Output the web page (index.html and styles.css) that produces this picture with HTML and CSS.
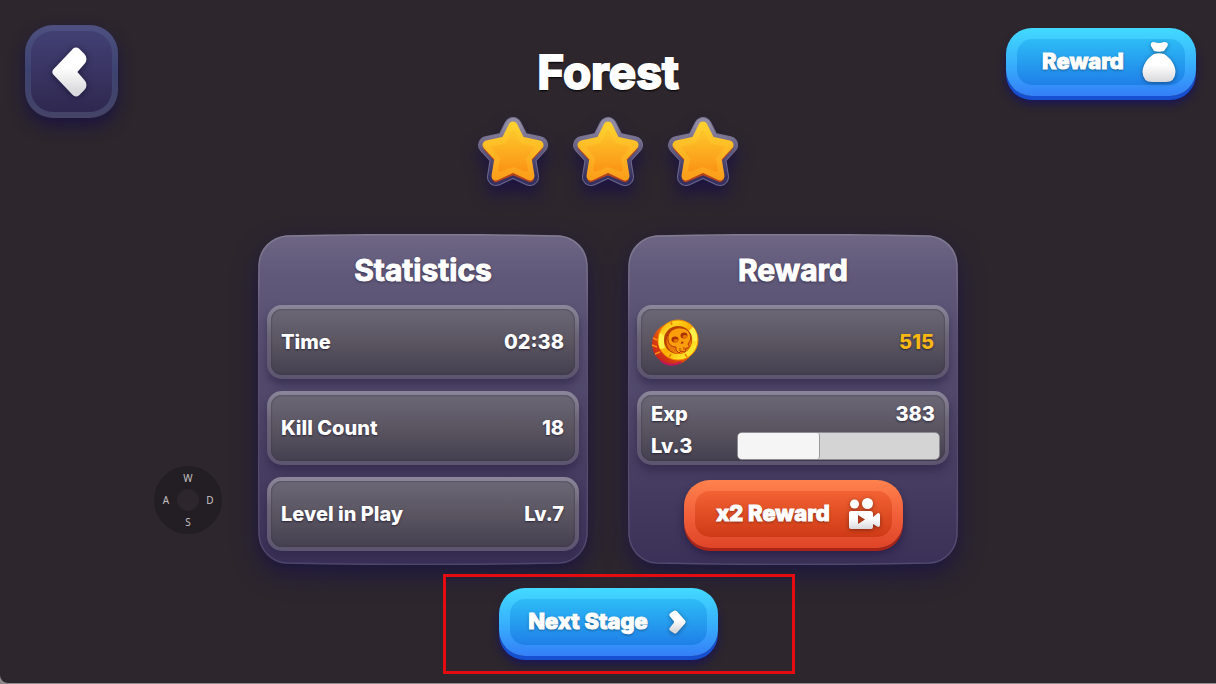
FILE: index.html
```
<!DOCTYPE html>
<html lang="en">
<head>
<meta charset="utf-8">
<meta name="viewport" content="width=device-width, initial-scale=1">
<title>Forest</title>
<link rel="stylesheet" href="styles.css">
</head>
<body>
<svg class="defs" aria-hidden="true">
  <defs>
    <linearGradient id="rim" x1="0" y1="0" x2="0" y2="1"><stop offset="0" stop-color="#918ba3"/><stop offset=".45" stop-color="#645c80"/><stop offset="1" stop-color="#35305f"/></linearGradient>
    <linearGradient id="rimEdge" x1="0" y1="0" x2="0" y2="1"><stop offset="0" stop-color="#77718e"/><stop offset="1" stop-color="#6a678c"/></linearGradient>
    <linearGradient id="gold" x1="0" y1="0" x2="0" y2="1"><stop offset="0" stop-color="#ffd02e"/><stop offset="1" stop-color="#fca01c"/></linearGradient>
    <linearGradient id="goldInner" x1="0" y1="0" x2="0" y2="1"><stop offset="0" stop-color="#fdc42a"/><stop offset="1" stop-color="#fb9616"/></linearGradient>
    <linearGradient id="white" x1="0" y1="0" x2="0" y2="1"><stop offset=".4" stop-color="#fff"/><stop offset="1" stop-color="#d9d9dc"/></linearGradient>
    <linearGradient id="panelFill" x1="0" y1="0" x2="0" y2="1"><stop offset="0" stop-color="#6e6684"/><stop offset=".12" stop-color="#61597a"/><stop offset=".5" stop-color="#50486a"/><stop offset="1" stop-color="#3b3158"/></linearGradient>
    <linearGradient id="panelEdge" x1="0" y1="0" x2="0" y2="1"><stop offset="0" stop-color="#837d92"/><stop offset=".3" stop-color="#5d5575"/><stop offset="1" stop-color="#51496f"/></linearGradient>
    <linearGradient id="coinSide" x1="1" y1="0" x2="0" y2="1"><stop offset="0" stop-color="#ffb000"/><stop offset=".5" stop-color="#e85a08"/><stop offset="1" stop-color="#b80b25"/></linearGradient>
    <linearGradient id="coinFace" x1="0" y1="0" x2="1" y2="1"><stop offset="0" stop-color="#ff9b00"/><stop offset=".25" stop-color="#ffd51f"/><stop offset=".5" stop-color="#ffae00"/><stop offset=".8" stop-color="#ffe92e"/><stop offset="1" stop-color="#f79400"/></linearGradient>
    <symbol id="star" viewBox="0 0 70 72">
      <g stroke-linejoin="round">
        <path d="M35 10 42.500 25 61 29 49 42 52 61 35 53 18 61 21 42 9 29 27.500 25Z" fill="url(#rimEdge)" stroke="url(#rimEdge)" stroke-width="18"/>
        <path d="M35 10 42.500 25 61 29 49 42 52 61 35 53 18 61 21 42 9 29 27.500 25Z" fill="url(#rim)" stroke="url(#rim)" stroke-width="16"/>
        <path d="M35 12 42.500 27 61 31 49 44 52 62 35 55 18 62 21 44 9 31 27.500 27Z" fill="#b4431e" stroke="#b4431e" stroke-width="8"/>
        <path d="M35 10 42.500 25 61 29 49 42 52 60 35 52 18 60 21 42 9 29 27.500 25Z" fill="url(#gold)" stroke="url(#gold)" stroke-width="9"/>
        <path d="M35 17 41 29 54 32 46 42 48 54 35 49 22 54 24 42 16 32 29 29Z" fill="url(#goldInner)" stroke="url(#goldInner)" stroke-width="4"/>
      </g>
    </symbol>
    <symbol id="plate" viewBox="0 0 330 331" preserveAspectRatio="none">
      <path d="M28 2Q165 -1 302 2C317 4 328 15 329 30Q331 165 329 301C328 316 317 328 302 329Q165 332 28 329C13 328 2 316 1 301Q-1 165 1 30C2 15 13 4 28 2Z" fill="url(#panelFill)" stroke="url(#panelEdge)" stroke-width="1.500"/>
    </symbol>
  </defs>
</svg>

<main class="screen">
  <header class="top">
    <button class="back" type="button" aria-label="Back">
      <svg viewBox="0 0 38 52" width="38" height="52"><path d="M25 6 6 26 25 46 30 41Q32 39 30 37L23 29Q21 26 23 23L30 15Q32 13 30 11Z" fill="url(#white)" stroke="url(#white)" stroke-width="9" stroke-linejoin="round"/></svg>
    </button>
    <div class="heading">
      <h1>Forest</h1>
      <div class="stars" role="img" aria-label="3 of 3 stars">
        <svg class="star"><use href="#star"/></svg>
        <svg class="star"><use href="#star"/></svg>
        <svg class="star"><use href="#star"/></svg>
      </div>
    </div>
    <button class="btn blue reward-btn" type="button">
      <span>Reward</span>
      <svg viewBox="0 0 34 42" width="34" height="42"><path d="M12 10 9 5Q8 1 12 1Q17 3 22 1Q27 1 25.500 5L22 10Q17 11.500 12 10Z" fill="#fff"/><path d="M12 13Q17 11.500 22 13C29 17 33.500 25 33.500 31Q33 41 24 41H10Q1 41 .5 31C.5 25 5 17 12 13Z" fill="url(#white)"/></svg>
    </button>
  </header>

  <div class="panels">
    <section class="panel">
      <svg class="plate" aria-hidden="true"><use href="#plate"/></svg>
      <h2>Statistics</h2>
      <dl class="rows">
        <div class="row"><dt>Time</dt><dd>02:38</dd></div>
        <div class="row"><dt>Kill Count</dt><dd>18</dd></div>
        <div class="row"><dt>Level in Play</dt><dd>Lv.7</dd></div>
      </dl>
    </section>

    <section class="panel">
      <svg class="plate" aria-hidden="true"><use href="#plate"/></svg>
      <h2>Reward</h2>
      <div class="rows">
        <div class="row coins">
          <svg viewBox="0 0 48 48" width="48" height="48" role="img" aria-label="Coins">
            <circle cx="22" cy="26" r="21" fill="url(#coinSide)"/>
            <path d="M2 20 6 22M1 27 6 29M4 36 9 34" stroke="#ff8a12" stroke-width="1.500"/>
            <path d="M10 43Q20 50 30 44" stroke="#c4145a" stroke-width="2" fill="none"/>
            <circle cx="27" cy="22" r="20" fill="url(#coinFace)" stroke="#f08a00"/>
            <path d="M9 31Q6 24 9 15L14 18Q12 25 14 30ZM42 9Q47 15 46 23L42 23Q41 16 38 13Z" fill="#fff04a"/>
            <path d="M20 4 21 7M18 39 20 36M36 39 34 36" stroke="#e98000" stroke-width="1.500"/>
            <circle cx="27" cy="22" r="14" fill="#b94004"/>
            <circle cx="28" cy="23.500" r="12.500" fill="#e87a05"/>
            <path d="M17 22C16 13 24 9 31 10 38 11 41 17 39 23L37 26Q39 29 37 30L35 30 34 34 30 33 28 35 25 32 25 29Q18 29 17 22Z" fill="#fb9e0c" stroke="#b83c02"/>
            <ellipse cx="24" cy="21.500" rx="3.500" ry="3" fill="#a83202"/><ellipse cx="33" cy="17.500" rx="3.500" ry="3" fill="#a83202"/>
            <ellipse cx="25" cy="22.500" rx="2.500" ry="1.500" fill="#e87404"/><ellipse cx="34" cy="18.500" rx="2.500" ry="1.500" fill="#e87404"/>
            <path d="M29.500 26 31 23 33 25Z" fill="#a83202"/><path d="M29 30V33M33 29V32" stroke="#b84202"/>
          </svg>
          <strong>515</strong>
        </div>
        <div class="row exp">
          <span>Exp</span><span class="gain">383</span>
          <label for="exp-bar">Lv.3</label>
          <progress id="exp-bar" value="41" max="100"></progress>
        </div>
      </div>
      <button class="btn red" type="button">
        <span>x2 Reward</span>
        <svg viewBox="0 0 32 34" width="32" height="34"><circle cx="6.500" cy="7" r="4.500" fill="#fff"/><circle cx="19.500" cy="6.500" r="5.500" fill="#fff"/><path fill-rule="evenodd" d="M3 14H22Q25 14 25 17V20L30 16Q32 16 32 18V28Q32 30 30 30L25 27V30Q25 32 23 32H3Q1 32 1 30V16Q1 14 3 14ZM10 18V27L17 22.500Z" fill="url(#white)"/></svg>
      </button>
    </section>
  </div>

  <footer class="actions">
    <button class="btn blue" type="button">
      <span>Next Stage</span>
      <svg viewBox="0 0 20 28" width="20" height="28"><path d="M7 5 15 14 7 23 4 21 8 16Q9 14 8 12L4 7Z" fill="url(#white)" stroke="url(#white)" stroke-width="5" stroke-linejoin="round"/></svg>
    </button>
  </footer>

  <div class="highlight"></div>
  <div class="keys" aria-hidden="true"><span>W</span><span>A</span><i></i><span>D</span><span>S</span></div>
</main>
</body>
</html>
```
FILE: styles.css
```
* { box-sizing: border-box; }
body {
  margin: 0;
  background: #8f898a;
  color: #fff;
  font-family: Inter, "Liberation Sans", sans-serif;
  font-weight: 800;
}
h1, h2, dl, dd { margin: 0; }
button { font: inherit; color: inherit; border: 0; padding: 0; cursor: pointer; }
.defs { position: absolute; width: 0; height: 0; }

.screen {
  position: relative;
  min-height: calc(100vh - 1px);
  background: #2d262d;
  border-radius: 0 0 0 8px;
  overflow: hidden;
}

.top {
  display: grid;
  grid-template-columns: 1fr auto 1fr;
  align-items: start;
}
.back {
  display: flex;
  align-items: center;
  justify-content: center;
  width: 93px;
  height: 93px;
  margin: 25px;
  padding-right: 4px;
  border: 6px solid transparent;
  border-radius: 28px;
  background:
    linear-gradient(#424074, #2f2850) padding-box,
    linear-gradient(#4d5080, #3d4370 50%, #454467) border-box;
  box-shadow: 0 8px 16px #1c1540;
}
.back svg { filter: drop-shadow(0 1px 3px #1c1838); }
.heading { padding-top: 44px; text-align: center; }
h1 {
  font-size: 46px;
  line-height: 56px;
  -webkit-text-stroke: 2px #fff;
  text-shadow: 0 0 2px #000, 0 2px 2px #000;
}
.stars { display: flex; justify-content: center; gap: 25px; margin-top: 16px; }
.star { width: 70px; height: 72px; filter: drop-shadow(0 10px 8px #1d1440); }

.btn {
  display: flex;
  align-items: center;
  justify-content: center;
  width: 219px;
  height: 68px;
  border: 11px solid transparent;
  border-radius: 26px;
  font-size: 22px;
  line-height: 28px;
  -webkit-text-stroke: 1px #fff;
  text-shadow: 0 1px 3px #0008;
}
.btn svg { filter: drop-shadow(0 1px 2px #0006); }
.btn span { margin-top: -2px; }
.blue {
  background:
    linear-gradient(#2dbcf6, #1f7fe8) padding-box,
    linear-gradient(#43daff, #38b2fc 50%, #347ff8) border-box;
  box-shadow: 0 4px 0 #1650d0, 0 8px 8px #1a1558;
}
.red {
  background:
    linear-gradient(#f26233, #cf3a16) padding-box,
    linear-gradient(#ff824d, #f2603a 50%, #de4527) border-box;
  box-shadow: 0 3px 0 #a92416, 0 6px 8px #281f49;
}
.reward-btn {
  justify-self: end;
  width: 190px;
  margin: 28px 20px 0 0;
  padding-left: 16px;
  gap: 18px;
}

.panels {
  position: relative;
  z-index: 0;
  display: flex;
  justify-content: center;
  gap: 40px;
  margin-top: 46px;
}
.panel {
  position: relative;
  display: flex;
  flex-direction: column;
  width: 330px;
  padding: 17px 9px 14px;
}
.plate {
  position: absolute;
  inset: 0;
  z-index: -1;
  width: 100%;
  height: 100%;
  overflow: visible;
  filter: drop-shadow(0 10px 12px #1d1740);
}
h2 {
  font-size: 30px;
  line-height: 38px;
  margin-bottom: 16px;
  text-align: center;
  -webkit-text-stroke: 1px #fff;
  text-shadow: 0 1px 3px #2a2339;
}
.rows { display: grid; gap: 12px; }
.row {
  display: flex;
  align-items: center;
  justify-content: space-between;
  height: 74px;
  padding: 0 11px 0 10px;
  border: 4px solid transparent;
  border-radius: 15px;
  background:
    linear-gradient(#6b6775, #58535f 55%, #454050) padding-box,
    linear-gradient(#8c879a, #6b6578 40%, #5c5570) border-box;
  box-shadow: inset 0 0 2px #35303f, 0 6px 8px #2d2548a0;
  font-size: 20px;
  line-height: 28px;
  text-shadow: 0 1px 2px #2a2339;
}
.row strong { color: #f9b912; font-weight: 800; }
.exp {
  display: grid;
  grid-template-columns: 1fr 203px;
  align-content: center;
  row-gap: 4px;
  padding-top: 4px;
  padding-right: 5px;
}
.gain { justify-self: end; margin-right: 5px; }
progress {
  appearance: none;
  width: 100%;
  height: 28px;
  border: 1px solid #8e8b93;
  border-radius: 5px;
  overflow: hidden;
}
progress::-webkit-progress-bar { background: #d4d4d4; }
progress::-webkit-progress-value { background: #f5f5f5; border-right: 1px solid #999; border-radius: 0 3px 3px 0; }
.panel .btn { align-self: center; margin-top: 15px; padding-left: 10px; gap: 18px; }

.actions { display: flex; justify-content: center; margin-top: 23px; }
.actions .btn { position: relative; gap: 20px; }

.highlight {
  position: absolute;
  top: 574px;
  left: calc(50% - 165px);
  width: 352px;
  height: 100px;
  border: 3px solid #e50b10;
  pointer-events: none;
}

.keys {
  position: absolute;
  top: 466px;
  left: 154px;
  display: grid;
  grid-template: repeat(3, 22px) / repeat(3, 22px);
  place-content: center;
  place-items: center;
  width: 68px;
  height: 68px;
  border-radius: 50%;
  background: #231e23;
  color: #c4c1c4;
  font: 10px "Noto Sans", sans-serif;
}
.keys span:first-child, .keys span:last-child { grid-column: 2; }
.keys span:nth-child(2) { grid-column: 1; }
.keys i { width: 22px; height: 22px; border-radius: 50%; background: #2d272d; }
```
